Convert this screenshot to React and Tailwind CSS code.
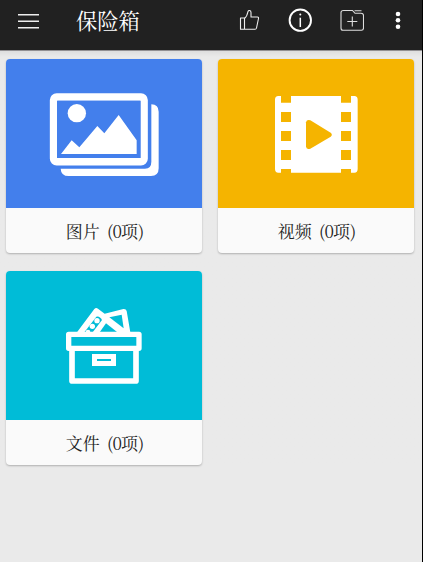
// Home screen of the safe box: top bar and category cards
import React from 'react';

const PicturesArt = () => (
  <svg viewBox="18 27 588 447" className="w-full h-full" fill="none">
    <rect x="161" y="141" width="271" height="194" rx="9" stroke="#fff" strokeWidth="23" />
    <path d="M171 152H422V324H171Z" fill="#437fec" />
    <circle cx="230.500" cy="189.500" r="27.500" fill="#fff" />
    <path d="M183 312L215 271L238 292L292 228L313 250L356 195L410 271V312Z" fill="#fff" />
    <path d="M454 163Q476 164 476 185V355Q476 378 453 378H206Q183 378 182 356H435Q454 356 454 335Z" fill="#fff" />
  </svg>
);

const VideosArt = () => (
  <svg viewBox="18 27 588 447" className="w-full h-full">
    <path
      d="M207 138V158H237V138H387V158H417V138H427Q437 138 437 149V357Q437 368 427 368H417V357H387V368H237V357H207V368H199Q189 368 189 357V149Q189 138 199 138Z"
      fill="#fff"
    />
    <g fill="#f5b400">
      <rect x="207" y="186" width="30" height="30" />
      <rect x="207" y="243" width="30" height="30" />
      <rect x="207" y="300" width="30" height="30" />
      <rect x="387" y="186" width="30" height="30" />
      <rect x="387" y="243" width="30" height="30" />
      <rect x="387" y="300" width="30" height="30" />
      <path d="M282 217Q284 207 295 211L356 248Q363 254 356 260L295 296Q284 300 282 290Z" />
    </g>
  </svg>
);

const FilesArt = () => (
  <svg viewBox="18 27 588 447" className="w-full h-full" fill="none">
    <path d="M231 211L283 141Q288 136 294 140L314 155L370 141Q378 140 380 147L391 211Z" fill="#fff" />
    <path d="M253 211L289 164Q299 161 306 174L278 211Z" fill="#00bcd7" />
    <circle cx="291" cy="176" r="8" fill="#fff" />
    <circle cx="277" cy="193" r="8" fill="#fff" />
    <circle cx="264" cy="210" r="7" fill="#fff" />
    <path d="M328 166L365 158L371 199Z" fill="#00bcd7" />
    <path d="M318 184L352 211H299Z" fill="#00bcd7" />
    <rect x="206" y="217" width="211" height="42" stroke="#fff" strokeWidth="16" strokeLinejoin="round" />
    <path d="M216 262V357H408V262" stroke="#fff" strokeWidth="17" strokeLinejoin="round" />
    <rect x="283.500" y="283.500" width="57" height="21" stroke="#fff" strokeWidth="15" />
  </svg>
);

const cards = [
  { name: '图片', color: 'bg-[#437fec]', Art: PicturesArt },
  { name: '视频', color: 'bg-[#f5b400]', Art: VideosArt },
  { name: '文件', color: 'bg-[#00bcd7]', Art: FilesArt },
];

const Header = () => (
  <header className="flex h-[51px] items-start border-b border-[#929092] bg-[#212121] text-white">
    <svg className="ml-[17px] mt-[10px] h-[22px] w-[23px]" viewBox="0 0 23 22" stroke="#eee" strokeWidth="1.4">
      <path d="M1 4.700H22M1 11.200H22M1 17.700H22" />
    </svg>
    <h1 className="ml-[36px] mt-[5px] text-[21.300px] leading-[30px]">保险箱</h1>
    <div className="ml-auto mt-[8px] flex items-center">
      <svg className="h-6 w-6" viewBox="0 0 24 24" fill="none" stroke="#eee" strokeWidth="1.1" strokeLinejoin="round">
        <path d="M3.500 10H7.500V21.300H3.500ZM7.500 10.500C10 8.500 10.500 6 11 3.500C11.500 2 14 2 14 4.500V9H20.500Q21.700 9 21.500 10.500L19.500 20Q19.200 21.300 18 21.300H7.500" />
      </svg>
      <svg className="ml-[27px] h-6 w-6" viewBox="0 0 24 24" fill="none" stroke="#fff">
        <circle cx="12.300" cy="12.200" r="10.700" strokeWidth="1.900" />
        <path d="M12.300 9.700V19" strokeWidth="1.500" />
        <circle cx="12.300" cy="6.500" r="1" fill="#fff" stroke="none" />
      </svg>
      <svg className="ml-[28px] h-6 w-6" viewBox="0 0 24 24" fill="none" stroke="#ddd" strokeWidth="1.100">
        <path d="M3.500 2.500H12.500L15 5.300H21Q23.500 5.300 23.500 7.500V20Q23.500 22.300 21.500 22.300H3Q1 22.300 1 20V4.500Q1 2.500 3.500 2.500ZM14.500 2.800H21.500M12.300 8.500V18.500M7.300 13.500H17.300" />
      </svg>
      <svg className="ml-[29px] mr-[19px] h-6 w-[10px]" viewBox="0 0 10 24" fill="#fff">
        <circle cx="5" cy="6" r="2.300" />
        <circle cx="5" cy="12.300" r="2.300" />
        <circle cx="5" cy="18.700" r="2.300" />
      </svg>
    </div>
  </header>
);

const Card = ({ name, color, Art }) => (
  <div className="overflow-hidden rounded-[4px] bg-[#fafafa] shadow-[0_1px_2px_rgba(0,0,0,0.25)]">
    <div className={`h-[149px] ${color}`}>
      <Art />
    </div>
    <p className="h-[45px] pl-[2px] text-center text-[17px] leading-[45px] text-[#222] [word-spacing:3px]">
      {name} <span className="tracking-[-0.800px]">(0</span>项)
    </p>
  </div>
);

export default function App() {
  return (
    <div className="h-[562px] w-[423px] overflow-hidden border-r border-black bg-[#eaeaea] font-['Noto_Serif_CJK_SC','Liberation_Serif','Noto_Sans_CJK_SC',serif]">
      <Header />
      <main className="grid grid-cols-[196px_196px] gap-x-4 gap-y-[18px] bg-linear-to-b from-[#dedede] to-[#eaeaea] to-[6px] pl-[6px] pt-[8px]">
        {cards.map((card) => (
          <Card key={card.name} {...card} />
        ))}
      </main>
    </div>
  );
}
